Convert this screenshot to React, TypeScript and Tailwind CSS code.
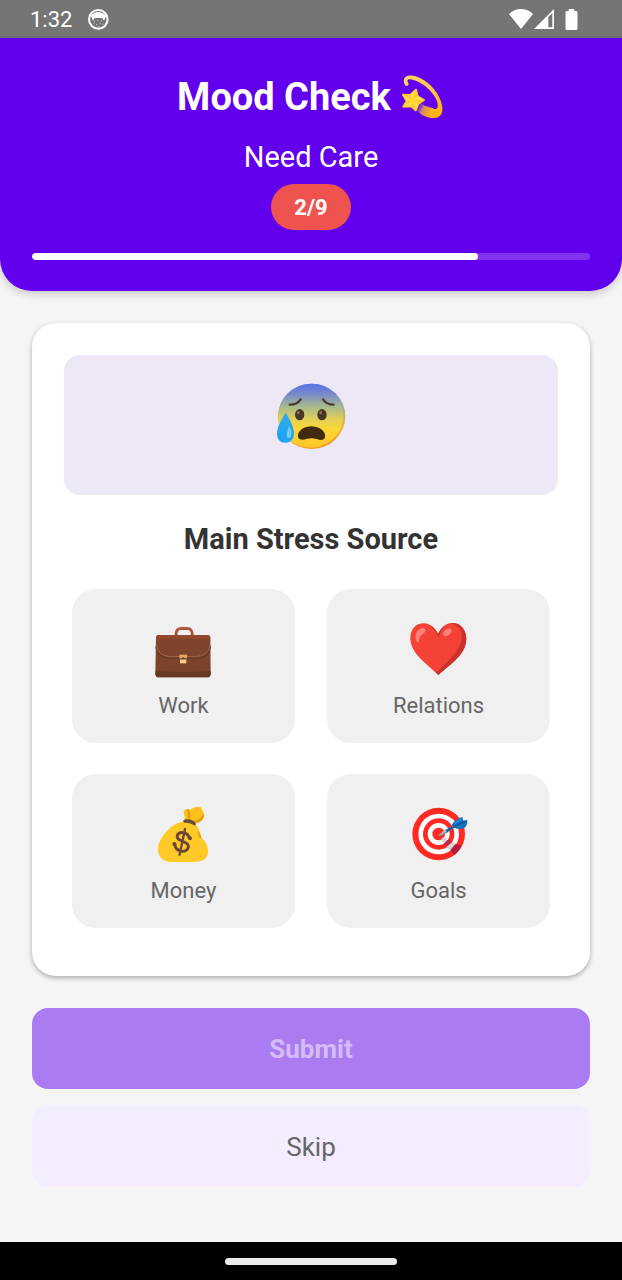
import { useState } from 'react';
import type { ReactNode } from 'react';

function DizzyIcon() {
  return (
    <svg viewBox="30 27 138 138" className="size-[46px]" aria-hidden="true">
      <defs>
        <linearGradient id="trail" x1="86" y1="120" x2="138" y2="146" gradientUnits="userSpaceOnUse">
          <stop offset="0" stopColor="#8a3fb5" stopOpacity="0.2" />
          <stop offset="0.35" stopColor="#d58a6c" />
          <stop offset="0.75" stopColor="#fcab12" />
          <stop offset="1" stopColor="#ffb300" />
        </linearGradient>
        <linearGradient id="ring" x1="60" y1="35" x2="145" y2="155" gradientUnits="userSpaceOnUse">
          <stop offset="0" stopColor="#ffd45e" />
          <stop offset="0.5" stopColor="#ffc64a" />
          <stop offset="1" stopColor="#ffb000" />
        </linearGradient>
      </defs>
      <path d="M94 114 Q110 126 132 130 L146 154 Q138 160 122 158 Q102 155 84 138 Z" fill="url(#trail)" />
      <path
        d="M48 60 C41 48 44 36 55 33 C80 26 120 49 142 82 C155 102 165 128 158 145 C152 160 136 160 124 158 L127 130 C137 134 145 132 146 125 C148 111 138 94 126 80 C106 57 77 42 60 43 C54 44 54 50 59 56 C59 62 53 65 48 60 Z"
        fill="url(#ring)"
      />
      <path
        d="M105 105 L88 117 L80 136 L67 124 L43 125 L53 108 L42 89 L64 90 L81 74 L86 94 Z"
        fill="#ffca28"
        stroke="#ffca28"
        strokeWidth="6"
        strokeLinejoin="round"
      />
      <path d="M81 74 L72 105 L64 90 Z M105 105 L72 105 L86 94 Z M80 136 L72 105 L88 117 Z M43 125 L72 105 L67 124 Z M42 89 L72 105 L53 108 Z" fill="#fee04a" />
    </svg>
  );
}

function AnxiousIcon() {
  return (
    <svg viewBox="48 31 210 210" className="size-[70px]" aria-hidden="true">
      <defs>
        <linearGradient id="face" x1="155" y1="38" x2="155" y2="238" gradientUnits="userSpaceOnUse">
          <stop offset="0" stopColor="#5b73ee" />
          <stop offset="0.15" stopColor="#7587cb" />
          <stop offset="0.35" stopColor="#a8b98e" />
          <stop offset="0.53" stopColor="#dfce58" />
          <stop offset="0.68" stopColor="#fdd835" />
          <stop offset="1" stopColor="#ffc426" />
        </linearGradient>
        <linearGradient id="faceEdge" x1="155" y1="38" x2="155" y2="238" gradientUnits="userSpaceOnUse">
          <stop offset="0" stopColor="#5b73ee" />
          <stop offset="0.35" stopColor="#a5b184" />
          <stop offset="0.7" stopColor="#f2b638" />
          <stop offset="1" stopColor="#ed9517" />
        </linearGradient>
        <linearGradient id="tear" x1="77" y1="124" x2="77" y2="216" gradientUnits="userSpaceOnUse">
          <stop offset="0" stopColor="#31a9e8" />
          <stop offset="1" stopColor="#1fa5f2" />
        </linearGradient>
      </defs>
      <ellipse cx="155" cy="137" rx="101" ry="98" fill="url(#faceEdge)" />
      <path d="M155 39 C211 39 249 82 250 133 C251 188 206 230 154 231 C102 232 56 193 55 138 C54 83 99 39 155 39 Z" fill="url(#face)" />
      <path d="M89 102 Q110 103 122 86" fill="none" stroke="#493d2c" strokeWidth="7" strokeLinecap="round" />
      <path d="M189 86 Q201 102 220 102" fill="none" stroke="#493d2c" strokeWidth="7" strokeLinecap="round" />
      <ellipse cx="119" cy="132" rx="14" ry="17" fill="#493724" />
      <ellipse cx="186" cy="132" rx="14" ry="17" fill="#493724" />
      <ellipse cx="115" cy="126" rx="4" ry="5" fill="#8b735a" transform="rotate(25 115 126)" />
      <ellipse cx="182" cy="126" rx="4" ry="5" fill="#8b735a" transform="rotate(25 182 126)" />
      <path
        d="M115 201 C109 188 124 168 154 167 C184 168 201 188 194 203 C190 210 179 208 170 205 Q154 200 139 205 C129 208 118 208 115 201 Z"
        fill="#422b0d"
      />
      <path d="M77 125 C83 138 102 164 102 188 C102 206 92 216 77 216 C61 216 51 206 51 189 C51 165 70 140 77 125 Z" fill="url(#tear)" />
      <path d="M86 165 C95 175 98 197 88 202 C80 204 79 194 82 184 Q85 176 86 165 Z" fill="#81d4fa" opacity="0.85" />
      <path d="M62 186 Q58 203 70 211 Q55 208 55 192 Z" fill="#1689d6" opacity="0.35" />
    </svg>
  );
}

function BriefcaseIcon() {
  return (
    <svg viewBox="45 30 174 174" className="size-[58px]" aria-hidden="true">
      <path
        d="M104 77 C104 62 108 51 124 51 L140 51 C156 51 161 61 161 76 L153 76 C153 65 150 60 141 60 L123 60 C115 60 112 66 112 77 Z"
        fill="#a65136"
      />
      <path d="M108 65 Q112 54 124 54 L140 54 Q153 54 157 65" fill="none" stroke="#b96b50" strokeWidth="2" />
      <path d="M48 84 Q48 75 57 75 H202 Q211 75 211 84 L212 191 Q212 202 201 202 H58 Q46 202 46 191 Z" fill="#7b432c" />
      <path d="M47 184 Q129 188 212 184 V191 Q212 202 201 202 H58 Q46 202 46 191 Z" fill="#643822" />
      <path d="M48 87 V84 Q48 75 57 75 H202 Q211 75 211 84 V87 Z" fill="#93482f" />
      <path d="M48 107 Q50 142 91 144 H169 Q209 142 211 107" fill="none" stroke="#643822" strokeWidth="4" />
      <path d="M49 86 H210 V105 Q208 139 168 140 H92 Q51 138 49 105 Z" fill="#7d442b" />
      <path d="M49 104 Q52 138 92 140 H168 Q207 138 210 104" fill="none" stroke="#a06a50" strokeWidth="3" />
      <path d="M118 134 H141 V146 H118 Z" fill="#eda75c" />
      <path d="M120 148 H139 V160 H120 Z" fill="#ffcc80" />
      <path d="M118 145 H126 V142 H133 V145 H141 V148 H118 Z" fill="#6d4529" />
    </svg>
  );
}

function HeartIcon() {
  return (
    <svg viewBox="45 30 174 174" className="size-[58px]" aria-hidden="true">
      <path
        d="M129 72 C141 47 157 38 174 39 C199 40 214 60 214 87 C213 134 170 159 130 195 C92 159 46 129 46 85 C46 58 62 40 86 40 C106 40 121 55 129 72 Z"
        fill="#f44336"
      />
      <path d="M165 40 C194 34 214 60 214 87 C213 134 170 159 130 195 L124 189 C159 151 195 126 200 85 C203 62 190 45 165 40 Z" fill="#c9332d" />
      <path d="M129 72 Q138 54 151 46 Q141 56 130 82 Q119 55 101 44 Q119 50 129 72 Z" fill="#c9332d" />
      <path d="M86 54 C94 56 93 66 84 72 C74 77 73 87 71 95 C68 99 64 95 62 88 C59 69 70 54 86 54 Z" fill="#ff8379" />
      <ellipse cx="157" cy="67" rx="15" ry="9" fill="#ff8379" transform="rotate(-38 157 67)" />
    </svg>
  );
}

function MoneyBagIcon() {
  return (
    <svg viewBox="45 30 174 174" className="size-[58px]" aria-hidden="true">
      <path
        d="M133 75 C136 65 131 58 131 51 C132 43 141 40 150 44 Q164 34 176 35 C186 36 185 43 189 50 C195 59 193 65 188 73 C183 81 174 85 166 85 Z"
        fill="#fcc21b"
      />
      <path d="M146 43 Q156 55 149 72 L143 69 Q145 53 140 43 Z" fill="#e69e0b" />
      <path d="M192 56 Q194 66 187 74 Q179 83 167 84 L162 76 Q178 75 192 56 Z" fill="#df9d09" />
      <path
        d="M130 80 C142 76 158 83 168 91 C178 98 179 118 188 132 C201 143 207 164 203 178 C199 196 183 201 160 201 H97 C71 201 55 188 54 165 C53 138 74 112 96 94 C108 84 119 82 130 80 Z"
        fill="#ffca28"
      />
      <path d="M173 108 Q181 112 183 125 Q184 132 178 129 Q173 124 175 118 Z" fill="#e7a20d" />
      <path d="M129 78 C133 69 163 71 168 87 C168 91 164 93 160 89 Q149 82 132 83 Z" fill="#6c4b38" />
      <g transform="rotate(12 127 140)" fill="none" stroke="#6c4936" strokeLinecap="round">
        <path d="M145 125 C141 115 133 112 124 113 C112 114 107 121 109 129 C113 144 146 133 148 151 C149 162 140 168 129 168 C116 168 109 162 107 152" strokeWidth="9" />
        <path d="M127 101 V180" strokeWidth="7" />
      </g>
      <circle cx="150" cy="130" r="6" fill="#6c4936" />
      <circle cx="103" cy="147" r="6" fill="#6c4936" />
    </svg>
  );
}

function TargetIcon() {
  return (
    <svg viewBox="45 30 174 174" className="size-[58px]" aria-hidden="true">
      <circle cx="131" cy="117" r="79" fill="#ff2a23" />
      <circle cx="131" cy="117" r="61" fill="#fff" />
      <circle cx="131" cy="117" r="47" fill="#ff2a23" />
      <circle cx="131" cy="117" r="33" fill="#fff" />
      <circle cx="131" cy="117" r="19" fill="#ff2a23" />
      <path d="M150 136 L163 134 L171 142 L155 157 L146 146 Z" fill="#c92338" />
      <path d="M138 132 L148 125 L157 135 L147 146 Z" fill="#d5d3d6" />
      <path d="M154 156 L172 141 L184 149 L167 168 Z" fill="#d5d3d6" />
      <path d="M166 166 L181 147 L199 153 Q193 169 178 181 Z" fill="#b71c3c" />
      <path d="M131 121 L152 103 L158 111 L133 124 Z" fill="#b8c6cc" />
      <path d="M132 122 L158 107 L159 112 L134 124 Z" fill="#788991" />
      <path d="M151 105 L178 91 L181 97 L157 112 Z" fill="#1265aa" />
      <path d="M170 91 Q175 79 193 69 L202 66 L205 78 L217 76 Q219 86 211 97 Q202 106 178 99 Z" fill="#1473bd" />
      <path d="M174 92 L205 77 L216 76 L214 80 L179 96 Z" fill="#0b5c9f" />
      <path d="M175 90 Q178 79 197 70 L201 74 Z" fill="#1e88e5" />
    </svg>
  );
}

function StatusBar() {
  return (
    <div className="flex h-[38px] items-center justify-between bg-[#757575] pr-11 pl-[30px] text-white">
      <div className="flex items-center gap-4">
        <span className="pt-0.5 text-[22px] leading-8">1:32</span>
        <svg viewBox="0 0 63 63" className="size-[21px]" aria-hidden="true">
          <circle cx="31" cy="31" r="28" fill="none" stroke="#fff" strokeWidth="6" />
          <path d="M8 20 Q30 -2 55 20 L48 35 Q46 27 41 27 H22 Q17 27 15 35 Z" fill="#fff" />
          <path d="M18 35 h4 v3 h-4z M28 34 h3 v3 h-3z M39 34 h4 v3 h-4z M16 42 h3 v3 h-3z M24 45 h4 v3 h-4z M35 42 h3 v3 h-3z M43 44 h4 v3 h-4z M30 51 h4 v3 h-4z" fill="#c4c4c4" />
        </svg>
      </div>
      <div className="flex items-center" aria-hidden="true">
        <svg viewBox="0 0 72 60" className="h-5 w-6" fill="#fff">
          <path d="M0 15 Q16 0 36 0 T72 15 L36 60 Z" />
        </svg>
        <svg viewBox="0 0 63 60" className="ml-px h-5 w-[21px]">
          <path d="M0 60 L60 0 V60 Z M43 24 V55 H55 V13 Z" fill="#fff" fillRule="evenodd" />
        </svg>
        <svg viewBox="0 0 36 63" className="ml-2.5 h-[21px] w-[13px]" fill="#fff">
          <path d="M10 0 H26 V6 H32 Q36 6 36 10 V59 Q36 63 32 63 H4 Q0 63 0 59 V10 Q0 6 4 6 H10 Z" />
        </svg>
      </div>
    </div>
  );
}

const options: { label: string; icon: ReactNode }[] = [
  { label: 'Work', icon: <BriefcaseIcon /> },
  { label: 'Relations', icon: <HeartIcon /> },
  { label: 'Money', icon: <MoneyBagIcon /> },
  { label: 'Goals', icon: <TargetIcon /> },
];

export default function App() {
  const [selected, setSelected] = useState<string | null>(null);

  return (
    <div className="flex min-h-screen flex-col bg-[#f5f5f5] font-['Roboto',sans-serif]">
      <StatusBar />

      <header className="flex flex-col items-center rounded-b-[32px] bg-[#6200ee] px-8 pt-8 pb-[31px] text-white shadow-[0_3px_8px_rgba(0,0,0,0.18)]">
        <h1 className="flex items-center gap-2 text-[38px] leading-[54px] font-bold">
          Mood Check
          <DizzyIcon />
        </h1>
        <p className="mt-[13px] text-[29px] leading-10">Need Care</p>
        <span className="mt-[7px] rounded-3xl bg-[#ef5350] px-[23px] pt-[9px] pb-[7px] text-[22px] leading-[30px] font-bold">
          2/9
        </span>
        <div
          role="progressbar"
          aria-label="Mood score"
          aria-valuenow={80}
          aria-valuemin={0}
          aria-valuemax={100}
          className="mt-[23px] h-[7px] w-full overflow-hidden rounded-full bg-[#8133f1]"
        >
          <div className="h-full w-4/5 rounded-full bg-white" />
        </div>
      </header>

      <main className="flex flex-1 flex-col px-8 pt-8">
        <section className="rounded-3xl bg-white px-8 pt-8 pb-12 shadow-[0_2px_5px_rgba(0,0,0,0.3)]">
          <div className="flex h-[140px] justify-center rounded-2xl bg-[#ede7f6] pt-[26px]">
            <AnxiousIcon />
          </div>
          <h2 className="mt-6 text-center text-[29px] leading-10 font-bold text-[#333]">Main Stress Source</h2>
          <div className="mt-[30px] grid grid-cols-2 gap-x-8 gap-y-[31px] px-2">
            {options.map((option) => (
              <button
                key={option.label}
                type="button"
                aria-pressed={selected === option.label}
                onClick={() => setSelected(option.label)}
                className={`flex flex-col items-center rounded-3xl pt-[31px] pb-[22px] ${
                  selected === option.label ? 'bg-[#e0d0fb]' : 'bg-[#f0f0f0]'
                }`}
              >
                {option.icon}
                <span className="mt-[13px] text-[22px] leading-[30px] text-[#666]">{option.label}</span>
              </button>
            ))}
          </div>
        </section>

        <button
          type="button"
          disabled={!selected}
          className="mt-8 h-[81px] rounded-2xl bg-[#6200ee] pt-0.5 text-[26px] font-bold text-white disabled:bg-[#ab7bf1] disabled:text-[#d5bcf8]"
        >
          Submit
        </button>
        <button type="button" className="mt-4 h-[82px] rounded-2xl bg-[#f3edff] pt-0.5 text-[26px] text-[#666]">
          Skip
        </button>
      </main>

      <div className="flex h-[38px] items-center justify-center bg-black">
        <div className="h-[7px] w-[172px] rounded-full bg-[#ebebeb]" />
      </div>
    </div>
  );
}
